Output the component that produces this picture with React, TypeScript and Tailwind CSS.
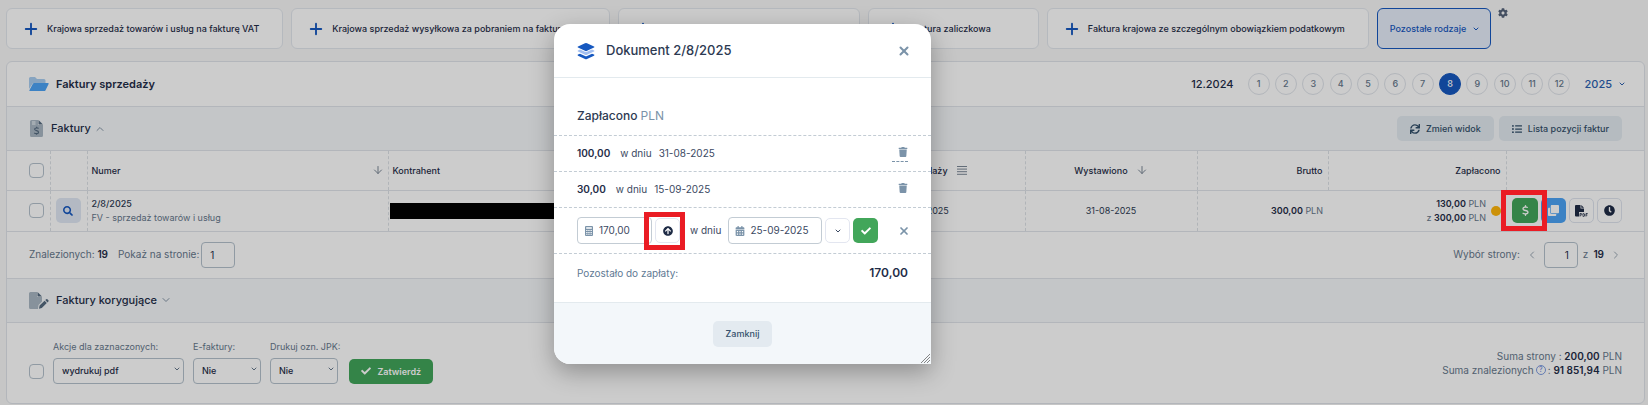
import type { ReactNode } from "react";
import {
  FaArrowCircleUp,
  FaCalendarAlt,
  FaCheck,
  FaClock,
  FaClone,
  FaCog,
  FaListUl,
  FaSearch,
  FaSync,
  FaTrash,
} from "react-icons/fa";
import { FaDollarSign } from "react-icons/fa6";
import { ArrowDown, ChevronDown, ChevronLeft, ChevronRight, ChevronUp, Plus, X } from "lucide-react";

const months = [1, 2, 3, 4, 5, 6, 7, 8, 9, 10, 11, 12];

function LayersIcon() {
  return (
    <svg viewBox="0 0 18 18" className="size-[18px] shrink-0" aria-hidden="true">
      <path d="M9 9.2 1 5.6Q0 5 1 4.4L8 1.2q1-.4 2 0l7 3.2q1 .6 0 1.2L9.600 9.100Z" fill="#1658c0" />
      <path d="M1 8.400 3 7.500l5 2.300q1 .4 2 0l5-2.300 2 .9q1 .6 0 1.200l-7 3.200q-1 .4-2 0L1 9.600q-1-.6 0-1.200Z" fill="#a3bff0" />
      <path d="M1 12.600l2-.9 5 2.300q1 .4 2 0l5-2.300 2 .9q1 .6 0 1.200L10 17q-1 .4-2 0l-7-3.200q-1-.6 0-1.200Z" fill="#1658c0" />
    </svg>
  );
}

function FolderIcon() {
  return (
    <svg viewBox="0 0 20 16" className="h-4 w-5 shrink-0" aria-hidden="true">
      <path d="M0 13V2.500Q0 1 1.500 1H6l2 2h7q1.500 0 1.500 1.500V7H4Z" fill="#a9cdf0" />
      <path d="M5 7h14q1 0 .6 1l-3.200 6.400q-.3.600-1 .600H.800q-.8 0-.4-.8L4 7.600Q4.300 7 5 7Z" fill="#4ba3f5" />
    </svg>
  );
}

function InvoiceIcon() {
  return (
    <svg viewBox="0 0 13 17" className="mx-px h-[17px] w-[13px] shrink-0" aria-hidden="true">
      <path d="M1.500 0H8v5h5v10.500q0 1.500-1.500 1.500h-10Q0 17 0 15.500v-14Q0 0 1.500 0Z" fill="#a9b7c3" />
      <path d="M8.500 0 13 4.500H8.500Z" fill="#566b80" />
      <path d="M2 2h3.500M2 4h3.500" stroke="#f3f7fa" strokeWidth="1" />
      <path d="M8.600 8.500C8 7.700 4.600 7.500 4.600 9.300c0 1.700 4 1 4 2.900 0 1.800-3.400 1.700-4.300.6M6.600 6.700v1M6.600 13.500v1.200" fill="none" stroke="#566b80" strokeWidth="1.100" />
    </svg>
  );
}

function CorrectionIcon() {
  return (
    <svg viewBox="0 0 20 17" className="h-[17px] w-5 shrink-0" aria-hidden="true">
      <path d="M1.500 0H8v5h5v4.500L9.500 13 9 17H1.500Q0 17 0 15.500v-14Q0 0 1.500 0Z" fill="#a9b7c3" />
      <path d="M8.500 0 13 4.500H8.500Z" fill="#566b80" />
      <path d="m10.600 13.400 5-4.700 2.200 2.300-5 4.900-2.800.8ZM16.300 8l.9-.8q.6-.5 1.200 0l1 1.100q.5.600 0 1.200l-.9.900Z" fill="#566b80" />
    </svg>
  );
}

function PdfIcon() {
  return (
    <svg viewBox="0 0 13 12" className="h-3 w-[13px]" aria-hidden="true">
      <path d="M1 0h4.500v3.500H9V7H4v4.500H1q-1 0-1-1V1Q0 0 1 0Z" fill="#1e2b45" />
      <path d="M6.300 0 9 2.700H6.300Z" fill="#1e2b45" />
      <path d="M5 11.500V8.500h1q.9 0 .9.800t-.9.800H5M8 8.500v3h.6q1.100 0 1.100-1.500T8.600 8.500Zm3 3V8.500h1.700M11 10h1.400" fill="none" stroke="#1e2b45" strokeWidth=".8" />
    </svg>
  );
}

function CalculatorIcon() {
  return (
    <svg viewBox="0 0 8 10" className="h-[10px] w-2 shrink-0" aria-hidden="true">
      <rect width="8" height="10" rx="1" fill="#7b93a9" />
      <path d="M1.200 1.200h5.600v1.500H1.200ZM1.200 4h1.300v1H1.200Zm2.100 0h1.300v1H3.300Zm2.200 0h1.300v1H5.500ZM1.200 5.900h1.300v1H1.200Zm2.100 0h1.300v1H3.300Zm2.200 0h1.300v1H5.500ZM1.200 7.800h1.300v1H1.200Zm2.100 0h1.300v1H3.300Zm2.200 0h1.300v1H5.500Z" fill="#fff" />
    </svg>
  );
}

function TypeButton({ children, className = "" }: { children: ReactNode; className?: string }) {
  return (
    <button
      type="button"
      className={`flex h-[41px] shrink-0 items-center gap-[10px] rounded-md border border-[#e3e8ee] bg-white pr-[23px] pl-[18px] text-[9px] font-medium whitespace-nowrap text-[#1f2d48] ${className}`}
    >
      <Plus className="-mx-[3px] size-[18px] text-[#1658c0]" strokeWidth={2.5} />
      {children}
    </button>
  );
}

function CheckBox({ label }: { label: string }) {
  return (
    <input
      type="checkbox"
      aria-label={label}
      className="block size-[15px] shrink-0 appearance-none rounded-[4px] border border-[#b4c1cc] bg-white"
    />
  );
}

function SelectField({ id, label, value, className }: { id: string; label: string; value: string; className: string }) {
  return (
    <div className="flex flex-col gap-[3px]">
      <label htmlFor={id} className="text-[9px] leading-3 whitespace-nowrap text-[#66788c]">
        {label}
      </label>
      <div className={`relative ${className}`}>
        <select
          id={id}
          className="h-[26px] w-full appearance-none rounded-[4px] border border-[#b4c1cc] bg-white pl-2 text-[9px] font-medium text-[#1f2d48]"
        >
          <option>{value}</option>
        </select>
        <ChevronDown className="pointer-events-none absolute top-[9px] right-[3px] size-2 text-[#66788c]" strokeWidth={3} />
      </div>
    </div>
  );
}

function SectionBar({ icon, title, chevron, children }: { icon: ReactNode; title: string; chevron: ReactNode; children?: ReactNode }) {
  return (
    <div className="flex h-[44px] items-center border-b border-[#e0e4ea] bg-[#f5f8fa] px-[22px]">
      {icon}
      <h2 className="ml-[7px] text-[11px] font-medium text-[#1f2d48]">{title}</h2>
      <span className="ml-[3px] text-[#8494a6]">{chevron}</span>
      <div className="ml-auto flex gap-[5px]">{children}</div>
    </div>
  );
}

const grayButton =
  "flex h-[25px] items-center gap-[6px] rounded-[5px] bg-[#e3eaf0] px-[13px] text-[9px] font-medium whitespace-nowrap text-[#33506b]";
const squareButton = "flex size-[25px] shrink-0 items-center justify-center rounded-[5px]";

function InvoiceTable() {
  const dash = "border-r border-dashed border-[#dde1e6]";
  return (
    <table className="w-full table-fixed border-collapse text-[9px] text-[#2d3a52]">
      <colgroup>
        <col className="w-[43px]" />
        <col className="w-[37px]" />
        <col className="w-[301px]" />
        <col />
        <col className="w-[203px]" />
        <col className="w-[172px]" />
        <col className="w-[131px]" />
        <col className="w-[178px]" />
        <col className="w-[138px]" />
      </colgroup>
      <thead>
        <tr className="h-[39px] border-b border-[#e0e4ea] text-[#1f2d48]">
          <th className={`${dash} pl-[22px]`}>
            <CheckBox label="Zaznacz wszystkie" />
          </th>
          <th className={dash} />
          <th className={`${dash} px-1 text-left font-medium`}>
            <span className="flex items-center justify-between">
              Numer <ArrowDown className="size-3 text-[#7b8796]" />
            </span>
          </th>
          <th className={`${dash} px-1 text-left font-medium`}>Kontrahent</th>
          <th className={`${dash} font-medium`}>
            <span className="flex items-center justify-center gap-[9px]">
              Data sprzedaży
              <svg viewBox="0 0 10 9" className="h-[9px] w-[10px]" aria-hidden="true">
                <path d="M0 .5h10M0 3.100h10M0 5.700h10M0 8.300h10" stroke="#7b8796" strokeWidth="1" />
              </svg>
            </span>
          </th>
          <th className={`${dash} font-medium`}>
            <span className="flex items-center justify-center gap-2">
              Wystawiono <ArrowDown className="size-3 text-[#7b8796]" />
            </span>
          </th>
          <th className={`${dash} px-[5px] text-right font-medium`}>Brutto</th>
          <th className={`${dash} px-[5px] text-right font-medium`}>Zapłacono</th>
          <th />
        </tr>
      </thead>
      <tbody>
        <tr className="h-[41px] border-b border-[#e0e4ea]">
          <td className={`${dash} pl-[22px]`}>
            <CheckBox label="Zaznacz 2/8/2025" />
          </td>
          <td className={`${dash} px-[5px]`}>
            <button type="button" aria-label="Podgląd" className={`${squareButton} bg-[#e0e8f4] text-[#1658c0]`}>
              <FaSearch className="size-[10px]" />
            </button>
          </td>
          <td className={`${dash} px-1 leading-[14px]`}>
            <div className="font-medium">2/8/2025</div>
            <div className="text-[#66788c]">FV - sprzedaż towarów i usług</div>
          </td>
          <td className={`${dash} pl-px`}>
            <div className="relative z-20 h-4 w-[180px] bg-black" />
          </td>
          <td className={`${dash} text-center`}>31-08-2025</td>
          <td className={`${dash} text-center`}>31-08-2025</td>
          <td className="px-[5px] text-right text-[#66788c]">
            <span className="font-semibold text-[#1f2d48]">300,00</span> PLN
          </td>
          <td className="pr-[5px]">
            <div className="flex items-center justify-end gap-[5px]">
              <div className="text-right leading-[14px] text-[#66788c]">
                <div>
                  <span className="font-semibold text-[#1f2d48]">130,00</span> PLN
                </div>
                <div>
                  z <span className="font-semibold text-[#1f2d48]">300,00</span> PLN
                </div>
              </div>
              <span className="size-[10px] rounded-full bg-[#ffb60a]" />
            </div>
          </td>
          <td>
            <div className="flex items-center justify-end gap-[3px] pr-[22px]">
              <div className="relative">
                <button type="button" aria-label="Zapłata" className="flex h-[25px] w-[26px] items-center justify-center rounded-[5px] bg-[#42a65a] text-white">
                  <FaDollarSign className="size-[11px]" />
                </button>
                <div className="pointer-events-none absolute -top-2 -left-[11px] z-20 h-[41px] w-[46px] border-[5px] border-[#ea1c24]" />
              </div>
              <button type="button" aria-label="Kopiuj" className={`${squareButton} bg-[#4ba3f5] text-white`}>
                <FaClone className="size-[11px]" />
              </button>
              <button type="button" aria-label="Drukuj PDF" className={`${squareButton} border border-[#dfe4ee] bg-white`}>
                <PdfIcon />
              </button>
              <button type="button" aria-label="Historia" className={`${squareButton} border border-[#dfe4ee] bg-white text-[#1e2b45]`}>
                <FaClock className="size-[11px]" />
              </button>
            </div>
          </td>
        </tr>
      </tbody>
    </table>
  );
}

function PaymentRow({ amount, date, marked = false }: { amount: string; date: string; marked?: boolean }) {
  return (
    <li className="flex h-9 items-center border-t border-dashed border-[#c3ccd4] px-[23px] text-[10px] text-[#3b4962]">
      <strong className="font-semibold text-[#1f2d48]">{amount}</strong>
      <span className="ml-[10px]">w dniu</span>
      <span className="ml-[7px]">{date}</span>
      <button
        type="button"
        aria-label="Usuń wpłatę"
        className={`ml-auto flex h-4 w-4 items-start justify-end border-b border-dashed pt-px text-[#7b93a9] ${marked ? "border-[#7b93a9]" : "border-transparent"}`}
      >
        <FaTrash className="size-[10px]" />
      </button>
    </li>
  );
}

function PaymentDialog() {
  return (
    <section
      role="dialog"
      aria-label="Dokument 2/8/2025"
      className="absolute top-6 left-[554px] z-30 w-[377px] rounded-[16px] rounded-br-none bg-white shadow-[0_8px_24px_rgba(0,0,0,0.3)]"
    >
      <header className="flex h-[54px] items-center border-b border-[#e3eaee] px-[23px]">
        <LayersIcon />
        <h1 className="ml-[11px] text-[13px] font-medium text-[#2d3a52]">Dokument 2/8/2025</h1>
        <button type="button" aria-label="Zamknij okno" className="-mr-[3px] ml-auto text-[#7b93a9]">
          <X className="size-[14px]" strokeWidth={3.5} />
        </button>
      </header>
      <h2 className="px-[23px] pt-7 pb-[9px] text-[12px] leading-5 font-medium text-[#2d3a52]">
        Zapłacono <span className="font-normal text-[#7b93a9]">PLN</span>
      </h2>
      <ul>
        <PaymentRow amount="100,00" date="31-08-2025" marked />
        <PaymentRow amount="30,00" date="15-09-2025" />
      </ul>
      <form className="flex h-[47px] items-center border-y border-dashed border-[#c3ccd4] px-[23px] text-[10px] text-[#3b4962]">
        <label className="flex h-[27px] w-[75px] items-center gap-[6px] rounded-[4px] border border-[#c3ccd4] pl-[7px]">
          <CalculatorIcon />
          <input aria-label="Kwota" defaultValue="170,00" className="w-10 bg-transparent outline-none" />
        </label>
        <div className="relative ml-[3px]">
          <button type="button" aria-label="Wpisz pozostałą kwotę" className={`${squareButton} border border-[#e3e6f0] text-[#1e2b45]`}>
            <FaArrowCircleUp className="size-[10px]" />
          </button>
          <div className="pointer-events-none absolute -top-[6px] -left-[11px] h-[38px] w-[41px] border-[5px] border-[#ea1c24]" />
        </div>
        <span className="ml-[10px] whitespace-nowrap">w dniu</span>
        <label className="ml-[7px] flex h-[27px] w-[94px] items-center gap-[5px] rounded-[4px] border border-[#c3ccd4] pl-[6px]">
          <FaCalendarAlt className="size-[10px] shrink-0 text-[#7b93a9]" />
          <input aria-label="Data wpłaty" defaultValue="25-09-2025" className="w-[60px] bg-transparent outline-none" />
        </label>
        <button type="button" aria-label="Wybierz datę" className={`${squareButton} ml-[3px] border border-[#e3e6f0]`}>
          <ChevronDown className="size-2" strokeWidth={3} />
        </button>
        <button type="submit" aria-label="Zapisz wpłatę" className={`${squareButton} ml-[3px] bg-[#42a65a] text-white`}>
          <FaCheck className="size-[10px]" />
        </button>
        <button type="button" aria-label="Anuluj wpłatę" className="-mr-[2px] ml-auto text-[#7b93a9]">
          <X className="size-3" strokeWidth={3.5} />
        </button>
      </form>
      <div className="flex items-center justify-between px-[23px] pt-[9px] pb-[19px] leading-5">
        <span className="text-[10px] text-[#5f7a94]">Pozostało do zapłaty:</span>
        <strong className="text-[12px] font-semibold text-[#1f2d48]">170,00</strong>
      </div>
      <footer className="relative flex h-[62px] items-center justify-center rounded-bl-[16px] border-t border-[#e3eaee] bg-[#f3f7fa]">
        <button type="button" className="h-[26px] rounded-[5px] bg-[#e3eaf0] px-[13px] text-[9px] font-medium text-[#33506b]">
          Zamknij
        </button>
        <svg viewBox="0 0 10 10" className="absolute right-px bottom-px size-[10px]" aria-hidden="true">
          <path d="M1 10 10 1M4 10l6-6M7 10l3-3" stroke="#777" strokeWidth=".9" />
        </svg>
      </footer>
    </section>
  );
}

export default function App() {
  return (
    <div className="relative min-h-screen overflow-hidden bg-[#f8f8f8] pt-2 pr-[3px] pb-px pl-[6px] font-['Inter',sans-serif]">
      <nav className="flex gap-2">
        <TypeButton>Krajowa sprzedaż towarów i usług na fakturę VAT</TypeButton>
        <TypeButton>Krajowa sprzedaż wysyłkowa za pobraniem na fakturę VAT</TypeButton>
        <TypeButton className="w-[242px]">Eksport towarów</TypeButton>
        <TypeButton className="w-[171px]">Faktura zaliczkowa</TypeButton>
        <TypeButton>Faktura krajowa ze szczególnym obowiązkiem podatkowym</TypeButton>
        <button
          type="button"
          className="flex h-[41px] shrink-0 items-center gap-[6px] rounded-md border border-[#1658c0] bg-[#e6eefb] pr-[10px] pl-3 text-[9px] font-medium whitespace-nowrap text-[#1658c0]"
        >
          Pozostałe rodzaje
          <ChevronDown className="size-2" strokeWidth={3} />
        </button>
        <button type="button" aria-label="Ustawienia" className="-ml-px self-start text-[#55637a]">
          <FaCog className="size-[10px]" />
        </button>
      </nav>

      <main className="mt-3 rounded-md border border-[#e0e4ea] bg-white">
        <header className="flex h-[45px] items-center border-b border-[#e0e4ea] pr-[18px] pl-[22px]">
          <FolderIcon />
          <h1 className="ml-[7px] text-[11px] font-semibold text-[#1f2d48]">Faktury sprzedaży</h1>
          <span className="mr-[14px] ml-auto text-[11px] font-medium text-[#1f2d48]">12.2024</span>
          <ol className="flex w-[323px] justify-between">
            {months.map((m) => (
              <li key={m}>
                <button
                  type="button"
                  className={`flex size-[22px] items-center justify-center rounded-full border text-[9px] font-medium ${
                    m === 8 ? "border-[#1658c0] bg-[#1658c0] text-white" : "border-[#e0e4ea] text-[#66788c]"
                  }`}
                >
                  {m}
                </button>
              </li>
            ))}
          </ol>
          <button type="button" className="ml-[14px] flex items-center gap-[6px] text-[11px] font-medium text-[#2b5fb0]">
            2025 <ChevronDown className="size-2" strokeWidth={3} />
          </button>
        </header>

        <SectionBar icon={<InvoiceIcon />} title="Faktury" chevron={<ChevronUp className="size-3" />}>
          <button type="button" className={grayButton}>
            <FaSync className="size-[10px]" /> Zmień widok
          </button>
          <button type="button" className={grayButton}>
            <FaListUl className="size-[10px]" /> Lista pozycji faktur
          </button>
        </SectionBar>

        <InvoiceTable />

        <div className="flex h-[47px] items-center border-b border-[#e0e4ea] px-[22px] text-[10px] text-[#66788c]">
          <span>
            Znalezionych: <b className="font-semibold text-[#1f2d48]">19</b>
          </span>
          <label htmlFor="per-page" className="ml-[10px]">
            Pokaż na stronie:
          </label>
          <input
            id="per-page"
            defaultValue="1"
            className="ml-[2px] h-[26px] w-[34px] rounded-[4px] border border-[#b4c1cc] bg-white px-2 text-[#1f2d48]"
          />
          <label htmlFor="page" className="ml-auto">
            Wybór strony:
          </label>
          <button type="button" aria-label="Poprzednia strona" className="ml-[6px] text-[#9aa7b4]">
            <ChevronLeft className="size-3" />
          </button>
          <input
            id="page"
            defaultValue="1"
            className="ml-[6px] h-[26px] w-[34px] rounded-[4px] border border-[#b4c1cc] bg-white px-2 text-right text-[#1f2d48]"
          />
          <span className="ml-[5px] flex gap-[5px]">
            z <b className="font-semibold text-[#1f2d48]">19</b>
          </span>
          <button type="button" aria-label="Następna strona" className="ml-[6px] text-[#9aa7b4]">
            <ChevronRight className="size-3" />
          </button>
        </div>

        <SectionBar icon={<CorrectionIcon />} title="Faktury korygujące" chevron={<ChevronDown className="size-3" />} />

        <div className="flex h-[80px] items-center justify-between px-[22px]">
          <div className="flex items-end gap-[9px]">
            <div className="mb-[5px]">
              <CheckBox label="Zaznacz wszystkie pozycje" />
            </div>
            <SelectField id="action" label="Akcje dla zaznaczonych:" value="wydrukuj pdf" className="w-[131px]" />
            <SelectField id="e-invoice" label="E-faktury:" value="Nie" className="w-[68px]" />
            <SelectField id="jpk" label="Drukuj ozn. JPK:" value="Nie" className="w-[68px]" />
            <button
              type="button"
              className="flex h-[25px] items-center gap-[6px] rounded-[5px] bg-[#42a65a] px-3 text-[9px] font-semibold text-white"
            >
              <FaCheck className="size-[10px]" /> Zatwierdź
            </button>
          </div>
          <div className="text-right text-[10px] leading-[14px] text-[#66788c]">
            <div>
              Suma strony : <b className="font-semibold text-[#1f2d48]">200,00</b> PLN
            </div>
            <div className="flex items-center justify-end gap-[2px]">
              Suma znalezionych
              <span className="flex size-[10px] items-center justify-center rounded-full border border-[#7d9be0] text-[7px] text-[#5f80d8]">?</span>
              <span>
                : <b className="font-semibold text-[#1f2d48]">91 851,94</b> PLN
              </span>
            </div>
          </div>
        </div>
      </main>

      <div className="absolute inset-0 z-10 bg-black/20" />
      <PaymentDialog />
    </div>
  );
}
